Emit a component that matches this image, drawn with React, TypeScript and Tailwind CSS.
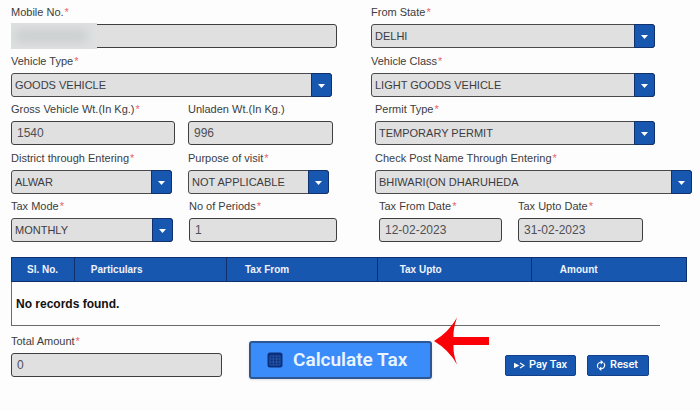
import React from "react";

type FieldProps = {
   id: string;
   label: string;
   required?: boolean;
   className?: string;
};

type TextFieldProps = FieldProps & {
   value: string;
   masked?: boolean;
};

type SelectFieldProps = FieldProps & {
   options: string[];
};

const FieldLabel: React.FC<{ id: string; label: string; required?: boolean }> = ({ id, label, required = true }) => {
   return (
      <label htmlFor={id} className="block mb-1 text-[11px] leading-4 text-[#3c3c40] whitespace-nowrap">
         {label}
         {required && <span className="ml-px text-[#e8656b]">*</span>}
      </label>
   );
};

const TextField: React.FC<TextFieldProps> = ({ id, label, required, value, masked, className = "" }) => {
   return (
      <div className={`min-w-0 ${className}`}>
         <FieldLabel id={id} label={label} required={required} />
         <div className="relative">
            <input
               id={id}
               type="text"
               defaultValue={value}
               className="block w-full h-6 px-[5px] rounded-[3px] border border-[#3f3f42] bg-[#e0e0e0] text-xs text-[#4f4f55]"
            />
            {masked && (
               <div className="absolute -inset-y-px left-0 w-[86px] overflow-hidden bg-[#dfe1e1]">
                  <div className="mt-1.5 ml-1 w-[72px] h-3.5 bg-[#cdd0d0] blur-[5px]" />
               </div>
            )}
         </div>
      </div>
   );
};

const SelectField: React.FC<SelectFieldProps> = ({ id, label, required, options, className = "" }) => {
   return (
      <div className={`min-w-0 ${className}`}>
         <FieldLabel id={id} label={label} required={required} />
         <div className="relative">
            <select
               id={id}
               className="block w-full h-6 pl-[3px] pr-6 appearance-none rounded-[3px] border border-[#4a4a4e] bg-[#e0e0e0] text-[11px] text-[#3c3c40]"
            >
               {options.map((option) => (
                  <option key={option}>{option}</option>
               ))}
            </select>
            <span className="absolute inset-y-0 right-0 w-[21px] flex items-center justify-center rounded-r-[3px] border border-[#10306e] bg-[#1857b0] pointer-events-none">
               <svg width="7" height="4" viewBox="0 0 7 4" className="mt-px" aria-hidden="true">
                  <path d="M0 0h7L3.5 4z" fill="#fff" />
               </svg>
            </span>
         </div>
      </div>
   );
};

const columns = [
   { title: "Sl. No.", className: "w-[9.3%] pl-[15px]" },
   { title: "Particulars", className: "w-[22.5%] pl-4" },
   { title: "Tax From", className: "w-[22.3%] pl-[18px]" },
   { title: "Tax Upto", className: "w-[22.8%] pl-[22px]" },
   { title: "Amount", className: "w-[23.1%] pl-7" },
];

const TaxTable: React.FC = () => {
   return (
      <div className="mr-[13px]">
         <table className="w-full table-fixed border-separate border-spacing-0">
            <thead>
               <tr className="h-[25px] bg-[#1857b0]">
                  {columns.map((column) => (
                     <th
                        key={column.title}
                        className={`p-0 border-y border-l last:border-r border-[#0f2f6d] text-left text-[10px] leading-4 font-bold text-[#eef3fb] ${column.className}`}
                     >
                        {column.title}
                     </th>
                  ))}
               </tr>
            </thead>
            <tbody>
               <tr className="h-[43px]">
                  <td colSpan={5} className="p-0 pl-1 border-l border-[#6b6b6b] text-xs font-bold text-[#111]">
                     No records found.
                  </td>
               </tr>
            </tbody>
         </table>
         <div className="w-[96%] border-b border-[#6b6b6b]" />
      </div>
   );
};

const CalculatorIcon: React.FC = () => {
   return (
      <svg width="16" height="16" viewBox="0 0 16 16" aria-hidden="true">
         <rect x="0.5" y="0.5" width="15" height="15" rx="2.5" fill="#0b2f7d" />
         <path d="M3 4h10M3 7h10M3 10h10M3 13h10M3 4v9M6.3 4v9M9.7 4v9M13 4v9" stroke="#2a5aac" strokeWidth="0.9" />
      </svg>
   );
};

const PayIcon: React.FC = () => {
   return (
      <svg width="11" height="7" viewBox="0 0 11 7" aria-hidden="true">
         <path d="M0 0.8L5.4 3.5L0 6.2z" fill="#fff" />
         <path d="M6 1L10 3.5L6 6" fill="none" stroke="#fff" strokeWidth="1.2" />
      </svg>
   );
};

const ResetIcon: React.FC = () => {
   return (
      <svg width="10" height="11" viewBox="0 0 10 11" fill="none" stroke="#fff" aria-hidden="true">
         <path d="M2.2 8.1A3.6 3.6 0 0 1 4.9 2.2M7.8 2.9A3.6 3.6 0 0 1 5.1 8.8" strokeWidth="1.1" />
         <path d="M4.7 0L7.4 2.2L4.7 4.4zM5.3 6.6L2.6 8.8L5.3 11z" fill="#fff" stroke="none" />
      </svg>
   );
};

const smallButton =
   "h-[21px] flex items-center rounded-[2px] border border-[#12418a] bg-[#1857b0] font-['Roboto',sans-serif] text-[11px] font-medium text-white whitespace-nowrap";

const App: React.FC = () => {
   return (
      <main className="min-h-screen pt-1 pl-[11px] bg-[#fdfdfe] font-['Liberation_Sans',Arial,sans-serif]">
         <form>
            <section className="grid gap-y-[5px] mb-1">
               <div className="grid grid-cols-[360fr_329fr]">
                  <TextField id="mobile" label="Mobile No." value="" masked className="pr-[34px]" />
                  <SelectField id="state" label="From State" options={["DELHI"]} className="pr-[45px]" />
               </div>
               <div className="grid grid-cols-[360fr_329fr]">
                  <SelectField id="type" label="Vehicle Type" options={["GOODS VEHICLE"]} className="pr-[39px]" />
                  <SelectField id="class" label="Vehicle Class" options={["LIGHT GOODS VEHICLE"]} className="pr-[45px]" />
               </div>
            </section>

            <section className="grid gap-y-[5px] mb-1">
               <div className="grid grid-cols-[177fr_187fr_325fr]">
                  <TextField id="gross" label="Gross Vehicle Wt.(In Kg.)" value="1540" className="pr-[13px]" />
                  <TextField
                     id="unladen"
                     label="Unladen Wt.(In Kg.)"
                     required={false}
                     value="996"
                     className="pr-[42px]"
                  />
                  <SelectField id="permit" label="Permit Type" options={["TEMPORARY PERMIT"]} className="pr-[45px]" />
               </div>
               <div className="grid grid-cols-[177fr_187fr_325fr]">
                  <SelectField id="district" label="District through Entering" options={["ALWAR"]} className="pr-4" />
                  <SelectField id="purpose" label="Purpose of visit" options={["NOT APPLICABLE"]} className="pr-[46px]" />
                  <SelectField
                     id="checkpost"
                     label="Check Post Name Through Entering"
                     options={["BHIWARI(ON DHARUHEDA"]}
                     className="pr-2"
                  />
               </div>
            </section>

            <section className="grid grid-cols-[178fr_190fr_139fr_182fr] mb-[15px]">
               <SelectField id="mode" label="Tax Mode" options={["MONTHLY"]} className="pr-4" />
               <TextField id="periods" label="No of Periods" value="1" className="pr-[42px]" />
               <TextField id="from" label="Tax From Date" value="12-02-2023" className="pr-4" />
               <TextField id="upto" label="Tax Upto Date" value="31-02-2023" className="pr-[57px]" />
            </section>

            <TaxTable />

            <div className="grid grid-cols-[238fr_256fr_195fr] items-start mt-[7px]">
               <TextField id="total" label="Total Amount" value="0" className="pr-[27px]" />
               <div className="relative w-[183px] mt-2">
                  <button
                     type="button"
                     className="w-full h-[38px] flex items-center gap-2.5 pl-4 rounded-[3px] border-2 border-[#2c5694] bg-[#3a8cfb] font-['Roboto',sans-serif] text-[19px] font-semibold text-[#eaf4ff] whitespace-nowrap shadow-sm"
                  >
                     <CalculatorIcon />
                     Calculate Tax
                  </button>
                  <svg
                     width="56"
                     height="48"
                     viewBox="0 0 56 48"
                     className="absolute left-full -top-6 ml-[2px]"
                     aria-hidden="true"
                  >
                     <path d="M0 24Q15 15 23 0.5Q19 12 19.5 20H55V28H19.5Q19 37 23 47.5Q15 33 0 24z" fill="#fb0007" />
                  </svg>
               </div>
               <div className="flex gap-[11px] mt-[22px]">
                  <button type="button" className={`${smallButton} w-[71px] pl-2 gap-1`}>
                     <PayIcon />
                     Pay Tax
                  </button>
                  <button type="button" className={`${smallButton} w-[62px] pl-2 gap-1`}>
                     <ResetIcon />
                     Reset
                  </button>
               </div>
            </div>
         </form>
      </main>
   );
};

export default App;
